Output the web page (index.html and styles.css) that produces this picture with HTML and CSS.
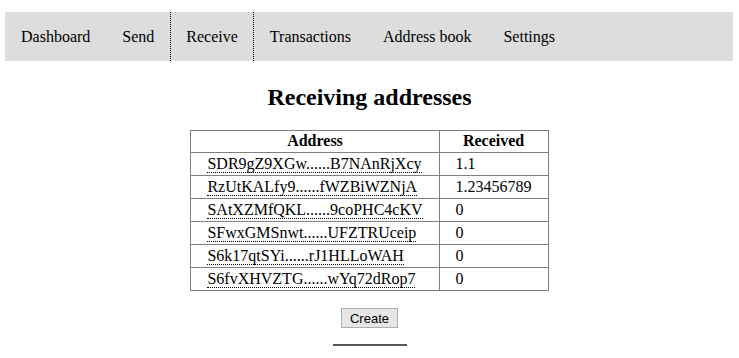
FILE: index.html
```html
<!DOCTYPE html>
<html lang="en">
<head>
    <meta charset="UTF-8">
    <title>Receiving addresses</title>
    <link rel="stylesheet" href="styles.css">
</head>
<body>
    <nav class="menu">
        <a href="#">Dashboard</a>
        <a href="#">Send</a>
        <a href="#" class="active">Receive</a>
        <a href="#">Transactions</a>
        <a href="#">Address book</a>
        <a href="#">Settings</a>
    </nav>

    <div class="content">
        <h1>Receiving addresses</h1>

        <table class="addresses">
            <thead>
                <tr>
                    <th>Address</th>
                    <th>Received</th>
                </tr>
            </thead>
            <tbody>
                <tr><td><a href="#" class="addr">SDR9gZ9XGw......B7NAnRjXcy</a></td><td>1.1</td></tr>
                <tr><td><a href="#" class="addr">RzUtKALfy9......fWZBiWZNjA</a></td><td>1.23456789</td></tr>
                <tr><td><a href="#" class="addr">SAtXZMfQKL......9coPHC4cKV</a></td><td>0</td></tr>
                <tr><td><a href="#" class="addr">SFwxGMSnwt......UFZTRUceip</a></td><td>0</td></tr>
                <tr><td><a href="#" class="addr">S6k17qtSYi......rJ1HLLoWAH</a></td><td>0</td></tr>
                <tr><td><a href="#" class="addr">S6fvXHVZTG......wYq72dRop7</a></td><td>0</td></tr>
            </tbody>
        </table>

        <div class="actions">
            <button>Create</button>
        </div>

        <hr class="divider">
    </div>
</body>
</html>
```

FILE: styles.css
```css
body {
    margin: 0;
    font-family: "Liberation Serif", "Times New Roman", serif;
    font-size: 16px;
    color: #000;
    background: #fff;
}

.menu {
    display: flex;
    margin: 12px 6px 0 5px;
    background: #ddd;
}

.menu a {
    padding: 15px 16px;
    line-height: 19px;
    color: #000;
    text-decoration: none;
}

.menu a.active {
    padding: 15px 15px;
    border-left: 1px dotted #000;
    border-right: 1px dotted #000;
}

.content {
    text-align: center;
}

h1 {
    font-size: 24px;
    line-height: 28px;
    margin: 22px 0 19px;
}

.addresses {
    margin: 0 auto;
    border-collapse: collapse;
    text-align: left;
}

.addresses th,
.addresses td {
    border: 1px solid #808080;
    padding: 2px 16px;
    line-height: 18px;
}

.addresses th {
    text-align: center;
    padding: 1px 16px 2px;
}

.addr {
    color: #000;
    text-decoration: none;
    border-bottom: 1px dotted #000;
}

.actions {
    margin-top: 17px;
}

button {
    font-family: "Liberation Sans", Arial, sans-serif;
    font-size: 13px;
    line-height: 15px;
    padding: 1px 8px;
    height: 20px;
    background: #e6e6e6;
    border: 1px solid #adadad;
    border-radius: 0;
    color: #000;
}

.divider {
    width: 74px;
    margin: 16px auto 0;
    border: none;
    border-top: 2px solid #555;
}
```
